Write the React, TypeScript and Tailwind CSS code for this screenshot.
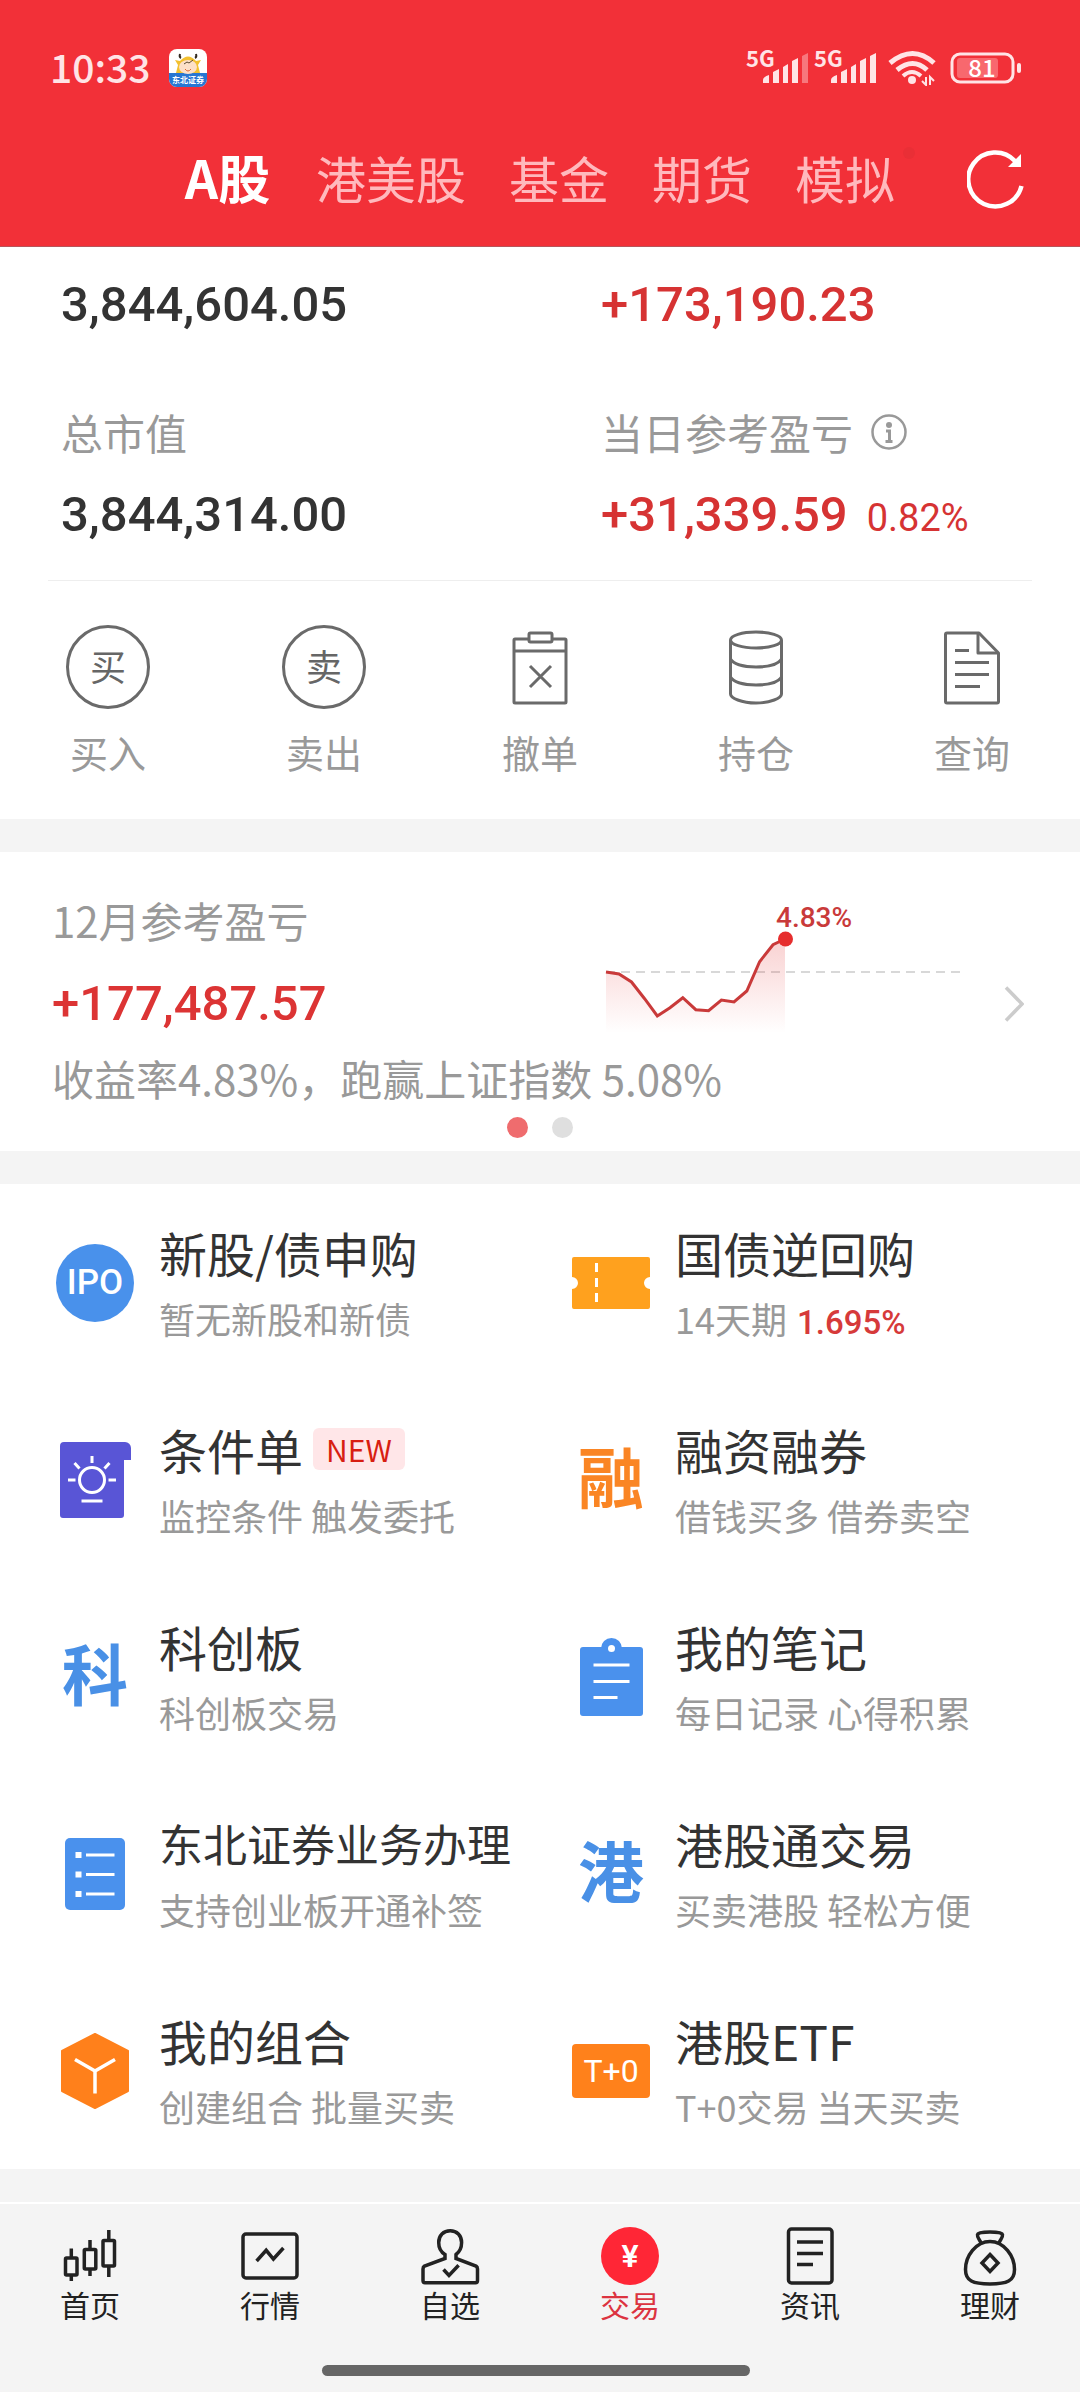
import type { ReactNode } from "react"

const tabs = ["港美股", "基金", "期货", "模拟"]

function Signal({ weak = false }: { weak?: boolean }) {
  return (
    <svg width="68" height="36" viewBox="0 0 68 36" fill="#ffe4e6" className="overflow-visible">
      <text x="0" y="17" fontSize="22" fontWeight="700">
        5G
      </text>
      <path d="M17 30 q0 -3 6 -5 v8 h-6z" />
      <path d="M27 22 l6 -3 v14 h-6z" />
      <path d="M37 17 l5 -3 v19 h-5z" />
      <path d="M46 11 l6 -3 v25 h-6z" />
      <path d="M56 6 l6 -3 v30 h-6z" opacity={weak ? 0.4 : 1} />
    </svg>
  )
}

function StatusBar() {
  return (
    <div className="flex h-[136px] items-center justify-between pl-[50px] pr-[58px] text-[#ffe4e6]">
      <div className="flex items-center gap-[18px]">
        <span className="pb-[5px] text-[39px] leading-[56px] font-medium">10:33</span>
        <svg width="38" height="38" viewBox="0 0 38 38">
          <rect width="38" height="38" rx="8" fill="#fff" />
          <path d="M0 24h38v6a8 8 0 0 1-8 8H8a8 8 0 0 1-8-8z" fill="#2876d2" />
          <path d="M6 11 l5 1 q8 -9 16 0 l5 -1 -3 5 2 8H7l2 -8z" fill="#f3c02f" />
          <ellipse cx="19" cy="18" rx="9" ry="7" fill="#fde0c8" />
          <path d="M12 9 q-2 -1 -1 -4M26 9 q2 -1 1 -4" stroke="#33291f" strokeWidth="2" fill="none" />
          <path d="M15 15l3-2 2 1 4-3" stroke="#5a4a30" fill="none" />
          <path d="M16 20 q3 4 6 0" stroke="#e06a30" fill="none" />
          <text x="19" y="34" fontSize="8" fontWeight="700" fill="#fff" textAnchor="middle">
            东北证券
          </text>
        </svg>
      </div>
      <div className="flex items-center">
        <Signal weak />
        <Signal />
        <svg width="68" height="36" viewBox="0 0 68 36" fill="none" stroke="#ffe4e6">
          <path d="M8 13 q23 -19 44 0" strokeWidth="5" />
          <path d="M15 20 q16 -13 30 0" strokeWidth="5" />
          <path d="M21 26 q9 -8 18 0" strokeWidth="4" />
          <circle cx="30" cy="30" r="4" fill="#ffe4e6" stroke="none" />
          <path d="M44 27v8l-4-4M48 35v-8l4 4" strokeWidth="2" />
        </svg>
        <svg width="72" height="32" viewBox="0 0 72 32" className="overflow-visible">
          <rect x="2" y="2" width="61" height="28" rx="8" fill="none" stroke="#ffe4e6" strokeWidth="3" />
          <rect x="7" y="6" width="41" height="20" rx="3" fill="#f8686e" />
          <rect x="67" y="11" width="4" height="10" rx="2" fill="#ffe4e6" />
          <text x="32" y="25" fontSize="24" fontWeight="500" fill="#fff" textAnchor="middle">
            81
          </text>
        </svg>
      </div>
    </div>
  )
}

function Header() {
  return (
    <header className="border-b border-[#b8545a] bg-[#f23038]">
      <StatusBar />
      <div className="flex h-[110px] items-start justify-between pl-[182px] pr-[55px]">
        <nav className="flex h-[82px] items-center gap-[43px] text-[50px] leading-[68px] whitespace-nowrap text-[#ffb9bd]">
          <button className="w-[91px] text-[52px] font-bold text-white">A股</button>
          {tabs.map((tab) => (
            <button key={tab} className="relative">
              {tab}
              {tab === "模拟" && (
                <span className="absolute top-1 -right-5 size-3 rounded-full bg-[#e92f36]" />
              )}
            </button>
          ))}
        </nav>
        <button aria-label="刷新" className="flex h-[86px] items-center">
          <svg width="58" height="60" viewBox="0 0 58 60" fill="none">
            <path d="M54.5 37 A27 27 0 1 1 48 12" stroke="#fff" strokeWidth="4.5" />
            <path d="M54 5v13H41z" fill="#fff" />
          </svg>
        </button>
      </div>
    </header>
  )
}

const amount = "font-[Roboto] text-[49px] leading-[56px] font-medium"

function Assets() {
  return (
    <section className="grid grid-cols-2 pt-[30px] pb-[37px]">
      <div className="pl-[61px]">
        <p className={`${amount} text-[#333]`}>3,844,604.05</p>
        <p className="mt-[71px] text-[42px] leading-[56px] text-[#999]">总市值</p>
        <p className={`${amount} mt-[27px] text-[#333]`}>3,844,314.00</p>
      </div>
      <div className="pl-[61px] text-[#d63333]">
        <p className={amount}>+173,190.23</p>
        <p className="mt-[71px] flex items-center gap-[18px] text-[42px] leading-[56px] text-[#999]">
          当日参考盈亏
          <svg width="36" height="36" viewBox="0 0 36 36" fill="none" stroke="#999">
            <circle cx="18" cy="18" r="16.5" strokeWidth="2.5" />
            <circle cx="18" cy="11" r="3" fill="#999" stroke="none" />
            <path d="M15 17h3.5v10M14.5 27.5h7" strokeWidth="3" />
          </svg>
        </p>
        <p className={`${amount} mt-[27px]`}>
          +31,339.59
          <span className="ml-[19px] text-[38px] leading-[40px] font-normal">0.82%</span>
        </p>
      </div>
    </section>
  )
}

function Ring({ children }: { children: string }) {
  return (
    <span className="flex size-[84px] items-center justify-center rounded-full border-3 border-[#6a6a6a] pb-[4px] text-[36px] leading-[48px] text-[#666]">
      {children}
    </span>
  )
}

function Line({ children }: { children: ReactNode }) {
  return (
    <svg width="84" height="84" viewBox="0 0 84 84" fill="none" stroke="#6a6a6a" strokeWidth="3" strokeLinejoin="round">
      {children}
    </svg>
  )
}

const actions = [
  { label: "买入", icon: <Ring>买</Ring> },
  { label: "卖出", icon: <Ring>卖</Ring> },
  {
    label: "撤单",
    icon: (
      <Line>
        <path d="M31 14H17a1 1 0 0 0-1 1v62a1 1 0 0 0 1 1h50a1 1 0 0 0 1-1V15a1 1 0 0 0-1-1H54" />
        <rect x="31" y="8" width="23" height="9" rx="1.5" />
        <path d="M16 26h52M32 41l21 21M53 41l-21 21" />
      </Line>
    ),
  },
  {
    label: "持仓",
    icon: (
      <Line>
        <ellipse cx="42" cy="15" rx="25.5" ry="8" />
        <path d="M16.5 15v54c0 4 11 9 25.5 9s25.5-5 25.5-9V15" />
        <path d="M16.5 34c3 5 13 8 25.5 8s22.5-3 25.5-8M16.5 52c3 5 13 8 25.5 8s22.5-3 25.5-8" />
      </Line>
    ),
  },
  {
    label: "查询",
    icon: (
      <Line>
        <path d="M49 8H17a1.5 1.5 0 0 0-1.5 1.5v67a1.5 1.5 0 0 0 1.5 1.5h50a1.5 1.5 0 0 0 1.5-1.5V28z" />
        <path d="M48 8v20h20M25 25.5h14M25 37.5h34M25 49.5h34M25 61.5h25" />
      </Line>
    ),
  },
]

function Actions() {
  return (
    <nav>
      <hr className="mx-[48px] border-[#eee]" />
      <div className="grid grid-cols-5 pt-[44px] pb-[40px]">
        {actions.map((action) => (
          <button key={action.label} className="flex flex-col items-center gap-[16px]">
            {action.icon}
            <span className="text-[38px] leading-[54px] text-[#999]">{action.label}</span>
          </button>
        ))}
      </div>
    </nav>
  )
}

const trend =
  "0,72 13,74 25.5,82 38.6,98.7 51.3,116 64,107.7 76.8,97.7 89.8,109.7 102.6,110.7 115.4,100 128,102 140.8,91 153.6,61.7 167,44.7 179,39"

function Monthly() {
  return (
    <section className="pt-[40px] pb-[13px] pl-[52px] text-[42px] leading-[56px] text-[#999]">
      <div className="flex items-end pr-[56px]">
        <div className="flex-1 pb-[2px]">
          <p>12月参考盈亏</p>
          <p className={`${amount} mt-[28px] text-[#dc3434]`}>+177,487.57</p>
        </div>
        <svg width="354" height="134" viewBox="0 0 354 134" className="overflow-visible">
          <defs>
            <linearGradient id="fade" x1="0" y1="0" x2="0" y2="1">
              <stop offset="0" stopColor="#e53030" stopOpacity="0.22" />
              <stop offset="1" stopColor="#e53030" stopOpacity="0" />
            </linearGradient>
          </defs>
          <path d="M0 72H354" stroke="#d8d8d8" strokeWidth="2" strokeDasharray="9 6" />
          <polygon points={`${trend} 179,133 0,133`} fill="url(#fade)" />
          <polyline points={trend} fill="none" stroke="#c93a3a" strokeWidth="3" />
          <circle cx="179.5" cy="39" r="7.5" fill="#e62e2e" />
          <text x="170" y="27" fontSize="28" fontWeight="500" fontFamily="Roboto" fill="#c93a3a">
            4.83%
          </text>
        </svg>
        <svg width="20" height="36" viewBox="0 0 20 36" className="mb-[12px] ml-[44px]" fill="none" stroke="#ccc" strokeWidth="3.5">
          <path d="M2 1.5 18 18 2 34.5" />
        </svg>
      </div>
      <p className="mt-[16px]">收益率4.83%，跑赢上证指数 5.08%</p>
      <div className="mt-[11px] -ml-[52px] flex justify-center gap-[24px]">
        <span className="size-[21px] rounded-full bg-[#ef6c6e]" />
        <span className="size-[21px] rounded-full bg-[#dfdfdf]" />
      </div>
    </section>
  )
}

function TicketIcon() {
  return (
    <svg width="78" height="52" viewBox="0 0 78 52">
      <path d="M2 0h74a2 2 0 0 1 2 2v18a6 6 0 0 0 0 12v18a2 2 0 0 1-2 2H2a2 2 0 0 1-2-2V32a6 6 0 0 0 0-12V2a2 2 0 0 1 2-2z" fill="#ffa11e" />
      <path d="M24.5 6v9M24.5 21v9M24.5 36v9" stroke="#fff" strokeWidth="3" />
    </svg>
  )
}

function ConditionIcon() {
  return (
    <svg width="71" height="76" viewBox="0 0 71 76">
      <path d="M4 0h61a6 6 0 0 1 6 6v12h-7v55a3 3 0 0 1-3 3H3a3 3 0 0 1-3-3V4a4 4 0 0 1 4-4z" fill="#5955d6" />
      <g fill="none" stroke="#fff" strokeWidth="3">
        <circle cx="32" cy="38" r="12.5" />
        <path d="M32 14v7M8 38h7.5M48.5 38H56M14.5 21l5 5.5M49.5 21l-5 5.5M21.5 59h21" />
      </g>
    </svg>
  )
}

function NoteIcon() {
  return (
    <svg width="63" height="78" viewBox="0 0 63 78">
      <circle cx="31.5" cy="10.5" r="10.5" fill="#4a91ed" />
      <rect y="9" width="63" height="69" rx="3" fill="#4a91ed" />
      <circle cx="31.5" cy="10.5" r="3.5" fill="#fff" />
      <path d="M13.5 27h36M13.5 43.5h36M13.5 59.5h24" stroke="#fff" strokeWidth="3" />
    </svg>
  )
}

function ListIcon() {
  return (
    <svg width="60" height="72" viewBox="0 0 60 72">
      <rect width="60" height="72" rx="5" fill="#4a91ed" />
      <path d="M10.5 17h6M10.5 36.5h6M10.5 56h6" stroke="#fff" strokeWidth="6" />
      <path d="M21 17h28.5M21 36.5h28.5M21 56h28.5" stroke="#fff" strokeWidth="3" />
    </svg>
  )
}

function CubeIcon() {
  return (
    <svg width="68" height="76" viewBox="0 0 68 76">
      <path d="M34 1 67 18V58L34 75 1 58V18z" fill="#ff801b" stroke="#ff801b" strokeWidth="2" strokeLinejoin="round" />
      <path d="M14 26.5 34 38 54 26.5M34 38v22.5" fill="none" stroke="#fff" strokeWidth="3.5" />
    </svg>
  )
}

const glyph = "pb-[12px] text-[66px] leading-[72px] font-bold"

const services = [
  {
    title: "新股/债申购",
    desc: "暂无新股和新债",
    icon: (
      <span className="flex size-[78px] items-center justify-center rounded-full bg-[#4991eb] font-[Roboto] text-[35px] leading-[40px] font-medium text-white">
        IPO
      </span>
    ),
  },
  { title: "国债逆回购", desc: "14天期", rate: "1.695%", icon: <TicketIcon /> },
  { title: "条件单", tag: "NEW", desc: "监控条件 触发委托", icon: <ConditionIcon /> },
  {
    title: "融资融券",
    desc: "借钱买多 借券卖空",
    icon: <span className={`${glyph} text-[#fa8524]`}>融</span>,
  },
  {
    title: "科创板",
    desc: "科创板交易",
    icon: <span className={`${glyph} text-[#4990e6]`}>科</span>,
  },
  { title: "我的笔记", desc: "每日记录 心得积累", icon: <NoteIcon /> },
  { title: "东北证券业务办理", long: true, desc: "支持创业板开通补签", icon: <ListIcon /> },
  {
    title: "港股通交易",
    desc: "买卖港股 轻松方便",
    icon: <span className={`${glyph} text-[#4990e6]`}>港</span>,
  },
  { title: "我的组合", desc: "创建组合 批量买卖", icon: <CubeIcon /> },
  {
    title: "港股ETF",
    desc: "T+0交易 当天买卖",
    icon: (
      <span className="flex h-[54px] w-[78px] items-center justify-center rounded-sm bg-[#ff811b] font-[Roboto] text-[32px] leading-[40px] text-white">
        T+0
      </span>
    ),
  },
]

function Services() {
  return (
    <section className="grid grid-cols-2 gap-x-2 pl-[56px]">
      {services.map((item) => (
        <a key={item.title} href="#" className="flex h-[197px] items-center gap-[25px] whitespace-nowrap">
          <span className="flex w-[78px] shrink-0 justify-center">{item.icon}</span>
          <span className="flex flex-col gap-[8px] pb-[5px]">
            <span className="flex items-center gap-[10px] leading-[68px] text-[#333]">
              <span className={item.long ? "text-[44px]" : "text-[48px]"}>{item.title}</span>
              {item.tag && (
                <span className="rounded-md bg-[#ffe6e8] px-[13px] text-[30px] leading-[42px] text-[#d81e12]">
                  {item.tag}
                </span>
              )}
            </span>
            <span className="text-[36px] leading-[48px] text-[#999]">
              {item.desc}
              {item.rate && (
                <span className="ml-[10px] font-[Roboto] text-[33px] leading-[36px] font-medium text-[#d63a3a]">
                  {item.rate}
                </span>
              )}
            </span>
          </span>
        </a>
      ))}
    </section>
  )
}

const navItems = [
  {
    label: "首页",
    icon: (
      <>
        <rect x="5.5" y="32" width="11.5" height="17" rx="1" />
        <rect x="24.3" y="23.5" width="11.5" height="19.5" rx="1" />
        <rect x="43" y="14.5" width="11.5" height="25.5" rx="1" />
        <path d="M11.3 22.5V32M11.3 49v6M30 14v9M30 43v7M48.8 4v10M48.8 40v11" />
      </>
    ),
  },
  {
    label: "行情",
    icon: (
      <>
        <rect x="3" y="8" width="54" height="44" rx="3" />
        <path d="M16.6 35 26.2 24.3 33.4 33 43.4 22" />
      </>
    ),
  },
  {
    label: "自选",
    icon: (
      <>
        <path d="M25 28.5C20 25.5 18.7 21 18.7 16.5 18.7 9.5 23.5 4.8 30.2 4.8S41.6 9.5 41.6 16.5C41.6 21 40 25.5 36 28.5V32.5L56 40Q57.5 41 57.5 43V54.5Q57.5 56.7 55.5 56.7H5Q3 56.7 3 54.5V43Q3 41 4.5 40L25 32.5z" />
        <path d="M23.5 43.5 29 49.5 38.6 39.3" />
      </>
    ),
  },
  {
    label: "交易",
    active: true,
    icon: (
      <>
        <circle cx="30" cy="30" r="29" fill="#ff2636" stroke="none" />
        <text x="30" y="41" fontSize="32" fontWeight="600" fontFamily="Roboto" fill="#fff" stroke="none" textAnchor="middle">
          ¥
        </text>
      </>
    ),
  },
  {
    label: "资讯",
    icon: (
      <>
        <rect x="8.5" y="3" width="43.5" height="54" rx="3" />
        <path d="M17 16h26M17 27.5h26M17 38.5h16" />
      </>
    ),
  },
  {
    label: "理财",
    icon: (
      <>
        <path d="M30 15.5C44 15.5 54.5 30 54.5 43.5 54.5 55 47 58 30 58S5.5 55 5.5 43.5C5.5 30 16 15.5 30 15.5z" />
        <path d="M21 17C20 13.5 17 12 17.5 8.5 18 5 42 5 42.5 8.5 43 12 40 13.5 39 17" />
        <path d="M30 28.5 38 37 30 45.5 22 37z" />
      </>
    ),
  },
]

function BottomNav() {
  return (
    <footer className="border-t-2 border-white bg-[#f4f4f4] pt-[22px] pb-[17px]">
      <nav className="grid grid-cols-6">
        {navItems.map((item) => (
          <a key={item.label} href="#" className="flex flex-col items-center">
            <svg width="60" height="60" viewBox="0 0 60 60" fill="none" stroke="#222" strokeWidth="3.5">
              {item.icon}
            </svg>
            <span className={`text-[30px] leading-[36px] ${item.active ? "text-[#dc3340]" : "text-[#222]"}`}>
              {item.label}
            </span>
          </a>
        ))}
      </nav>
      <div className="mt-[43px] flex justify-center pr-2">
        <span className="h-[11px] w-[428px] rounded-full bg-[#666]" />
      </div>
    </footer>
  )
}

function App() {
  return (
    <div className="bg-[#f4f4f4] font-['Noto_Sans_CJK_SC',sans-serif]">
      <Header />
      <main className="flex flex-col gap-[33px] pb-[33px]">
        <div className="bg-white">
          <Assets />
          <Actions />
        </div>
        <div className="bg-white">
          <Monthly />
        </div>
        <div className="bg-white">
          <Services />
        </div>
      </main>
      <BottomNav />
    </div>
  )
}

export default App
